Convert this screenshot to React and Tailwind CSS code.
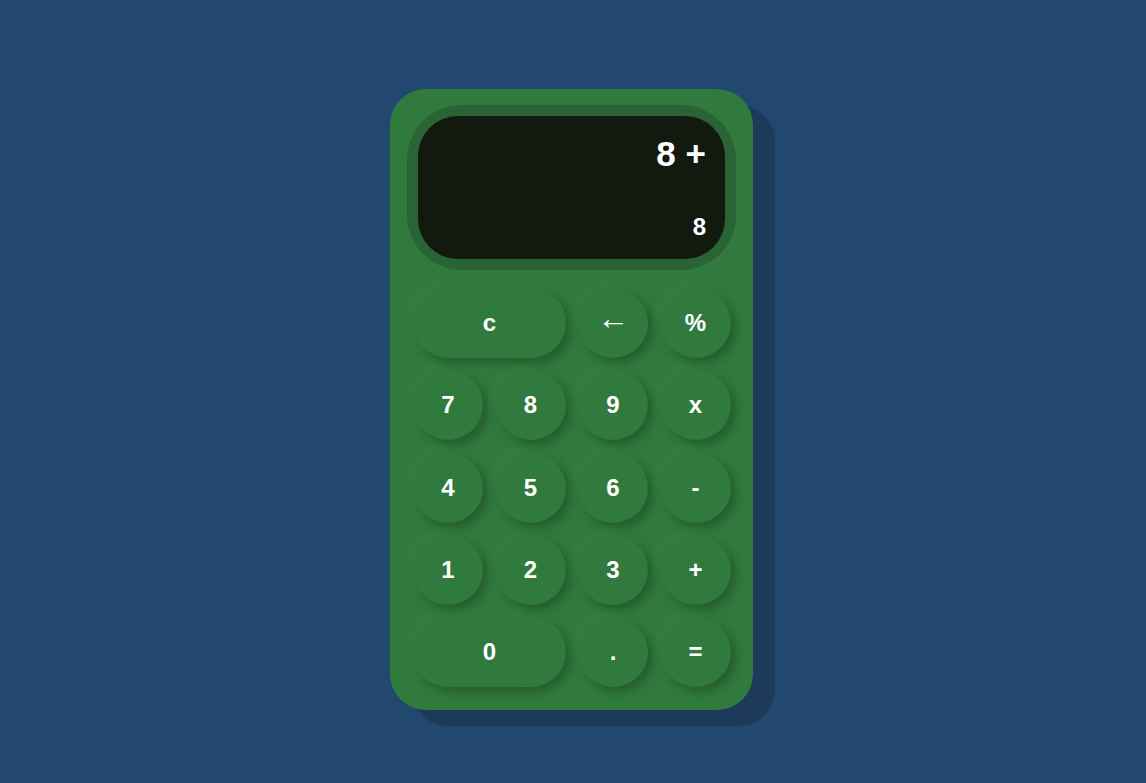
const rows = [
  [{ label: 'c', wide: true }, { label: '←', arrow: true }, { label: '%' }],
  [{ label: '7' }, { label: '8' }, { label: '9' }, { label: 'x' }],
  [{ label: '4' }, { label: '5' }, { label: '6' }, { label: '-' }],
  [{ label: '1' }, { label: '2' }, { label: '3' }, { label: '+' }],
  [{ label: '0', wide: true }, { label: '.' }, { label: '=' }],
];

const Key = ({ label, wide, arrow }) => (
  <button
    className={`flex h-[70px] items-center justify-center rounded-full bg-[#317a3e] text-white shadow-[5px_5px_10px_rgba(20,60,25,0.45),-5px_-5px_10px_rgba(70,150,85,0.18)] ${
      wide ? 'col-span-2 w-[153px]' : 'w-[70px]'
    } ${arrow ? "pb-[10px] font-['Liberation_Serif',serif] text-[32px] font-normal leading-none" : 'text-[24px] font-bold'}`}
  >
    {label}
  </button>
);

export default function App() {
  return (
    <div className="flex min-h-screen justify-center bg-[#23486f] pt-[89px] font-['Liberation_Sans',Arial,sans-serif]">
      <div className="ml-[-3px] h-[621px] w-[363px] rounded-[36px] bg-[#317a3e] px-[17px] pt-[16px] shadow-[22px_16px_0_#1d3a5b]">
        <div className="h-[165px] rounded-[55px] bg-[#2a6334] p-[11px]">
          <div className="flex h-full flex-col items-end rounded-[40px] bg-[#121a10] px-[19px] text-white">
            <div className="mt-[18px] text-[35px] font-bold leading-[40px]">8 +</div>
            <div className="mt-[39px] text-[24px] font-bold leading-[28px]">8</div>
          </div>
        </div>
        <div className="mt-[18px] grid grid-cols-[70px_70px_70px_70px] gap-x-[12.5px] gap-y-[12.3px] px-[6px]">
          {rows.map((row) =>
            row.map((key) => <Key key={key.label} {...key} />)
          )}
        </div>
      </div>
    </div>
  );
}
